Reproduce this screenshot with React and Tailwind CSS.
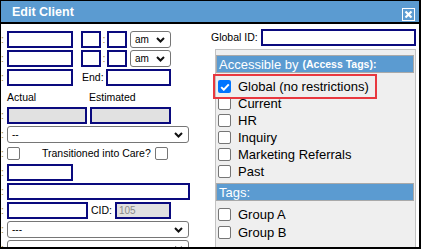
import React from "react";

function Colon() {
  return <span className="w-[6px] shrink-0 text-[10.5px] leading-none text-[#a8863c]">:</span>;
}

function Box({ className = "" }) {
  return <div className={"h-[17px] shrink-0 border-2 border-[#0a0a7e] " + className} />;
}

function Chevron() {
  return (
    <svg width="9" height="6" viewBox="0 0 9 6" className="shrink-0">
      <path d="M1 1l3.5 3.5L8 1" fill="none" stroke="#111" strokeWidth="2" />
    </svg>
  );
}

function Sel({ className = "", text }) {
  return (
    <div
      className={
        "h-[17px] shrink-0 flex items-center justify-between border border-[#767676] rounded-[3px] bg-white pl-[4px] pr-[5px] " +
        className
      }
    >
      <span className="text-[10px] leading-none text-black">{text}</span>
      <Chevron />
    </div>
  );
}

function Cb({ checked }) {
  return checked ? (
    <div className="w-[13px] h-[13px] rounded-[2px] bg-[#0075ff] flex items-center justify-center shrink-0">
      <svg width="10" height="8" viewBox="0 0 10 8">
        <path d="M1.2 4.1l2.6 2.6L8.8 1.4" fill="none" stroke="#fff" strokeWidth="2" />
      </svg>
    </div>
  ) : (
    <div className="w-[13px] h-[13px] rounded-[2px] border border-[#767676] bg-white shrink-0" />
  );
}

function Item({ label, checked, tall }) {
  return (
    <div className={(tall ? "h-[18px]" : "h-[17px]") + " shrink-0 flex items-center pl-[2px]"}>
      <Cb checked={checked} />
      <span className="ml-[7px] text-[13px] leading-none text-black">{label}</span>
    </div>
  );
}

function Row({ children }) {
  return <div className="h-[17px] shrink-0 flex items-center">{children}</div>;
}

export default function App() {
  return (
    <div className="w-[422px] h-[250px] bg-white font-['Liberation_Sans',Arial,sans-serif]">
      <div className="w-[421px] h-[249px] border-l border-t border-r-2 border-b-2 border-black overflow-hidden bg-white flex flex-col">
        {/* Title bar */}
        <div className="h-[23px] shrink-0 bg-[#5b9bd1] border-b-2 border-black flex justify-between">
          <span className="pl-[11px] pt-[5px] text-white text-[12.5px] font-bold leading-none">Edit Client</span>
          <div className="mt-[7px] mr-[4px] w-[13px] h-[13px] border border-white bg-[#5d9cd2] flex items-center justify-center">
            <svg width="9" height="9" viewBox="0 0 9 9">
              <path d="M1.5 1.5l6 6M7.5 1.5l-6 6" stroke="#fff" strokeWidth="2.2" />
            </svg>
          </div>
        </div>

        {/* Body */}
        <div className="flex flex-1 min-h-0">
          {/* Left column */}
          <div className="w-[208px] shrink-0 pt-[7px] flex flex-col gap-[2px] text-[10.5px] text-black">
            <Row>
              <Colon />
              <Box className="w-[66px] bg-white" />
              <Box className="ml-[8px] w-[20px] bg-white" />
              <span className="w-[6px] shrink-0 text-center leading-none text-[#a8863c]">:</span>
              <Box className="w-[20px] bg-white" />
              <Sel className="ml-[3px] w-[41px]" text="am" />
            </Row>
            <Row>
              <Colon />
              <Box className="w-[66px] bg-white" />
              <Box className="ml-[8px] w-[20px] bg-white" />
              <span className="w-[6px] shrink-0 text-center leading-none text-[#a8863c]">:</span>
              <Box className="w-[20px] bg-white" />
              <Sel className="ml-[3px] w-[41px]" text="am" />
            </Row>
            <Row>
              <Colon />
              <Box className="w-[66px] bg-white" />
              <span className="ml-[9px] w-[24px] shrink-0 leading-none">End:</span>
              <Box className="w-[65px] bg-white" />
            </Row>
            <Row>
              <span className="ml-[6px] pt-[1px] w-[82px] shrink-0 leading-none">Actual</span>
              <span className="pt-[1px] leading-none">Estimated</span>
            </Row>
            <Row>
              <Colon />
              <Box className="w-[80px] bg-[#e1e1e1]" />
              <Box className="ml-[3px] w-[81px] bg-[#e1e1e1]" />
            </Row>
            <Row>
              <Colon />
              <Sel className="w-[182px]" text="--" />
            </Row>
            <Row>
              <Colon />
              <Cb />
              <span className="ml-[22px] leading-none">Transitioned into Care?</span>
              <span className="ml-[4px]">
                <Cb />
              </span>
            </Row>
            <Row>
              <Colon />
              <Box className="w-[66px] bg-white" />
            </Row>
            <Row>
              <Colon />
              <Box className="w-[183px] bg-white" />
            </Row>
            <Row>
              <Colon />
              <Box className="w-[81px] bg-white" />
              <span className="ml-[3px] w-[24px] shrink-0 leading-none">CID:</span>
              <div className="h-[17px] w-[56px] shrink-0 border-2 border-[#0a0a7e] bg-[#e1e1e1] flex items-center pl-[2px]">
                <span className="text-[10px] leading-none text-[#8a8a8a]">105</span>
              </div>
            </Row>
            <Row>
              <Colon />
              <Sel className="w-[182px]" text="---" />
            </Row>
            <Row>
              <Colon />
              <Sel className="w-[182px]" text="" />
            </Row>
          </div>

          {/* Right column */}
          <div className="flex-1 pt-[5px] pl-[2px] flex flex-col">
            <div className="h-[17px] shrink-0 flex items-center text-[10.5px] text-black">
              <span className="w-[50px] shrink-0 leading-none">Global ID:</span>
              <Box className="w-[155px] bg-white" />
            </div>
            <div className="relative mt-[3px] ml-[4px] w-[201px] h-[220px] shrink-0 border border-[#c2c2c2] bg-[#efefef] pt-[5px]">
              <div className="mr-[1px] h-[18px] border border-[#a9a9a9] bg-[#5b9bd1] flex items-center pl-[2px] text-white text-[13px] leading-none">
                <span>Accessible by</span>
                <span className="ml-[4px] text-[10.5px] font-bold">(Access Tags):</span>
              </div>
              <div className="mt-[5px] flex flex-col">
                <Item label="Global (no restrictions)" checked />
                <Item label="Current" />
                <Item label="HR" />
                <Item label="Inquiry" />
                <Item label="Marketing Referrals" />
                <Item label="Past" />
              </div>
              <div className="mt-[3px] mr-[1px] h-[18px] border border-[#a9a9a9] bg-[#5b9bd1] flex items-center pl-[2px] text-white text-[13px] leading-none">
                <span>Tags:</span>
              </div>
              <div className="mt-[4px] flex flex-col">
                <Item label="Group A" tall />
                <Item label="Group B" tall />
              </div>
              <div className="absolute left-[-3px] top-[24px] w-[164px] h-[25px] border-2 border-[#e8383f]" />
            </div>
          </div>
        </div>
      </div>
    </div>
  );
}
